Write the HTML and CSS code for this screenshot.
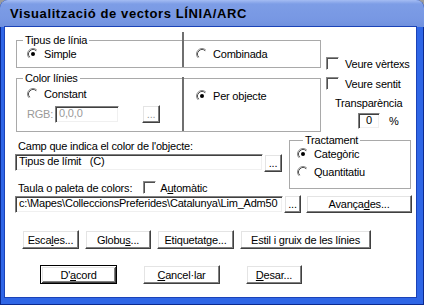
FILE: index.html
```html
<!DOCTYPE html>
<html lang="ca">
<head>
    <meta charset="UTF-8">
    <meta name="viewport" content="width=device-width, initial-scale=1.0">
    <title>Visualització de vectors LÍNIA/ARC</title>
    <link rel="stylesheet" href="styles.css">
</head>
<body>

    <!-- botons de radio clàssics -->
    <svg class="defs">
        <symbol id="radio" viewBox="0 0 12 12">
            <circle cx="6" cy="6" r="5" fill="#fff"/>
            <path d="M2.11 9.89 A5.5 5.5 0 0 1 9.89 2.11" fill="none" stroke="#8a8a8a"/>
            <path d="M2.82 9.18 A4.5 4.5 0 0 1 9.18 2.82" fill="none" stroke="#505050"/>
        </symbol>
        <symbol id="radio-on" viewBox="0 0 12 12">
            <use href="#radio"/>
            <circle cx="6" cy="6" r="2" fill="#000"/>
        </symbol>
    </svg>

    <div class="window">
        <div class="titlebar">Visualització de vectors LÍNIA/ARC</div>

        <div class="client">
            <div class="top">
                <div class="groups">
                    <fieldset class="group line-type">
                        <legend>Tipus de línia</legend>
                        <div class="half">
                            <label class="option"><svg class="radio"><use href="#radio-on"/></svg><span>Simple</span></label>
                        </div>
                        <div class="half sep">
                            <label class="option"><svg class="radio"><use href="#radio"/></svg><span>Combinada</span></label>
                        </div>
                    </fieldset>

                    <fieldset class="group line-color">
                        <legend>Color línies</legend>
                        <div class="half">
                            <label class="option"><svg class="radio"><use href="#radio"/></svg><span>Constant</span></label>
                            <div class="rgb-row">
                                <span class="disabled">RGB:</span>
                                <span class="edit rgb disabled">0,0,0</span>
                                <button class="btn dots disabled">...</button>
                            </div>
                        </div>
                        <div class="half sep">
                            <label class="option"><svg class="radio"><use href="#radio-on"/></svg><span>Per objecte</span></label>
                        </div>
                    </fieldset>
                </div>

                <div class="options">
                    <label class="check"><span class="checkbox"></span><span>Veure vèrtexs</span></label>
                    <label class="check"><span class="checkbox"></span><span>Veure sentit</span></label>
                    <div class="transp-label">Transparència</div>
                    <div class="transp-row">
                        <span class="edit transp">0</span>
                        <span class="percent">%</span>
                    </div>
                </div>
            </div>

            <div class="middle">
                <div class="field-col">
                    <div class="field-label">Camp que indica el color de l'objecte:</div>
                    <div class="field-row">
                        <span class="edit field">Tipus de límit&nbsp;&nbsp;&nbsp;(C)</span>
                        <button class="btn dots">...</button>
                    </div>
                    <div class="palette-row">
                        <span class="palette-label">Taula o paleta de colors:</span>
                        <label class="check auto"><span class="checkbox"></span><span>A<u>u</u>tomàtic</span></label>
                    </div>
                </div>

                <fieldset class="group treatment">
                    <legend>Tractament</legend>
                    <label class="option"><svg class="radio"><use href="#radio-on"/></svg><span>Categòric</span></label>
                    <label class="option"><svg class="radio"><use href="#radio"/></svg><span>Quantitatiu</span></label>
                </fieldset>
            </div>

            <div class="path-row">
                <span class="edit path">c:\Mapes\ColleccionsPreferides\Catalunya\Lim_Adm50</span>
                <button class="btn dots">...</button>
                <button class="btn advanced">Avança<u>d</u>es...</button>
            </div>

            <div class="button-row tools">
                <button class="btn scales">Esca<u>l</u>es...</button>
                <button class="btn globus">Globu<u>s</u>...</button>
                <button class="btn labels">Etiquetatge...</button>
                <button class="btn style">Estil i gruix de les línies</button>
            </div>

            <div class="button-row actions">
                <button class="btn default ok">D'<u>a</u>cord</button>
                <button class="btn cancel"><u>C</u>ancel·lar</button>
                <button class="btn save"><u>D</u>esar...</button>
            </div>
        </div>
    </div>

</body>
</html>
```

FILE: styles.css
```css
body {
    margin: 0;
    background-color: #9b9b9b;
    font-family: 'Liberation Sans', Arial, sans-serif;
    font-size: 11px;
    letter-spacing: -0.2px;
    color: #000;
}

.defs {
    display: none;
}

.window {
    width: 424px;
    height: 305px;
    box-sizing: border-box;
    padding: 0 8px 8px 5px;
    display: flex;
    flex-direction: column;
    background-color: #2f66e6;
    border-radius: 8px 8px 0 0;
    box-shadow: inset 1px 0 #0b2a8f, inset -1px -1px #0b2a8f;
}

.titlebar {
    height: 27px;
    margin: 0 -8px 0 -5px;
    padding-left: 10px;
    border-radius: 8px 8px 0 0;
    background: linear-gradient(#a4bcf3 0, #7d9de6 4px, #7797e3 20px, #6f90dd 27px);
    font-size: 13px;
    font-weight: bold;
    letter-spacing: 0.6px;
    line-height: 27px;
    color: #000;
}

.client {
    flex: 1;
    padding-top: 7px;
    display: flex;
    flex-direction: column;
    background-color: #fff;
    box-shadow: 0 0 0 1px #1b43b8;
}

/* marcs */
.group {
    margin: 0;
    padding: 0;
    min-width: 0;
    box-sizing: border-box;
    border: 1px solid #a9a9a9;
    display: flex;
}

.group legend {
    margin-left: 6px;
    padding: 0 2px;
    line-height: 12px;
}

.top {
    display: flex;
}

.groups {
    width: 305px;
    margin-left: 11px;
    display: flex;
    flex-direction: column;
    gap: 4px;
}

.half {
    width: 165px;
    box-sizing: border-box;
    padding-left: 10px;
}

.sep {
    flex: 1;
    width: auto;
    padding-left: 12px;
    border-left: 2px solid #6f6f6f;
}

.line-type .half {
    height: 21px;
    padding-top: 1px;
}

.line-type .sep {
    height: auto;
    margin-top: -14px;
    padding-top: 15px;
}

.line-color .half {
    height: 47px;
    padding-top: 3px;
}

.line-color .sep {
    height: auto;
    margin-top: -7px;
    padding-top: 12px;
}

.option {
    height: 14px;
    display: flex;
    align-items: center;
    gap: 5px;
}

.radio {
    width: 12px;
    height: 12px;
    flex: none;
}

.rgb-row {
    height: 18px;
    margin-top: 4px;
    display: flex;
    align-items: center;
}

.disabled {
    color: #9a9a9a;
}

/* controls */
.edit {
    box-sizing: border-box;
    height: 17px;
    padding: 0 3px;
    display: block;
    line-height: 13px;
    white-space: nowrap;
    overflow: hidden;
    background-color: #fff;
    border: 1px solid;
    border-color: #808080 #fff #fff #808080;
    box-shadow: inset 1px 1px #404040, inset -1px -1px #f0f0f0;
}

.checkbox {
    width: 13px;
    height: 13px;
    flex: none;
    box-sizing: border-box;
    background-color: #fff;
    border: 1px solid;
    border-color: #8a8a8a #fff #fff #8a8a8a;
    box-shadow: inset 1px 1px #505050;
}

.check {
    height: 13px;
    display: flex;
    align-items: center;
    gap: 6px;
}

.btn {
    box-sizing: border-box;
    height: 19px;
    padding: 0;
    font: inherit;
    letter-spacing: inherit;
    color: #000;
    background-color: #fff;
    border: 1px solid;
    border-color: #fff #404040 #404040 #fff;
    box-shadow: inset -1px -1px #808080, inset 1px 1px #e4e4e4;
    text-align: center;
}

.btn.default {
    border-color: #000;
    box-shadow: inset 1px 1px #fff, inset -1px -1px #404040, inset 2px 2px #e4e4e4, inset -2px -2px #808080;
}

.btn.disabled {
    color: #9a9a9a;
}

.dots {
    width: 18px;
    height: 18px;
    flex: none;
}

.rgb {
    width: 64px;
    margin-left: 2px;
}

.rgb-row .dots {
    margin-left: 23px;
}

/* columna dreta */
.options {
    margin-left: 5px;
    padding-top: 23px;
    display: flex;
    flex-direction: column;
}

.options .check + .check {
    margin-top: 7px;
}

.transp-label {
    margin-top: 7px;
    margin-left: 9px;
    line-height: 13px;
}

.transp-row {
    margin-top: 3px;
    display: flex;
    align-items: center;
}

.transp {
    width: 22px;
    height: 16px;
    margin-left: 32px;
    text-align: center;
}

.percent {
    margin-left: 9px;
}

/* camp i tractament */
.middle {
    margin-top: 2px;
    padding-left: 10px;
    display: flex;
}

.field-col {
    width: 267px;
}

.field-label {
    margin-top: 6px;
    padding-left: 3px;
    line-height: 13px;
}

.field-row {
    margin-top: 1px;
    display: flex;
    gap: 1px;
}

.field {
    width: 248px;
}

.palette-row {
    height: 13px;
    margin-top: 9px;
    display: flex;
    align-items: center;
}

.palette-label {
    padding-left: 3px;
}

.auto {
    margin-left: 11px;
    gap: 4px;
}

.treatment {
    width: 122px;
    height: 55px;
    margin-left: 7px;
    padding: 1px 0 0 7px;
    flex-direction: column;
    gap: 4px;
}

.path-row {
    margin-top: 1px;
    padding-left: 10px;
    display: flex;
    align-items: center;
}

.path {
    width: 268px;
}

.path-row .dots {
    width: 17px;
    margin-left: 1px;
}

.advanced {
    width: 106px;
    height: 18px;
    margin-left: 5px;
}

/* botons inferiors */
.button-row {
    display: flex;
}

.tools {
    margin-top: 17px;
    padding-left: 17px;
    gap: 6px;
}

.actions {
    margin-top: 16px;
    padding-left: 35px;
    gap: 26px;
}

.scales {
    width: 57px;
}

.globus {
    width: 66px;
}

.labels {
    width: 77px;
}

.style {
    width: 131px;
}

.ok,
.cancel {
    width: 77px;
}

.save {
    width: 56px;
}
```
